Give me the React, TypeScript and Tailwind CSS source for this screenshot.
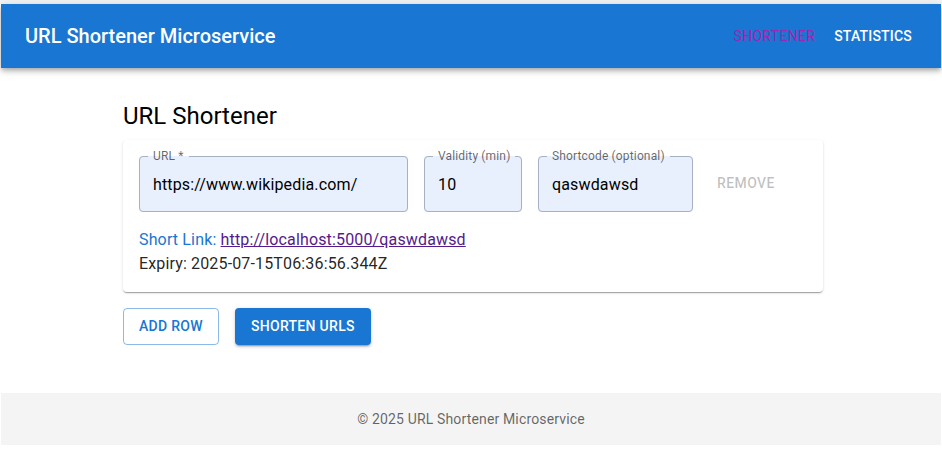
import React from 'react';

interface FieldProps {
    label: string;
    value: string;
    width: string;
}

const medium = "font-medium";

const Field: React.FC<FieldProps> = ({ label, value, width }) => (
    <fieldset className={`${width} h-[62px] min-w-0 border border-[#a7b1c2] rounded bg-[#e8f0fe] px-2 m-0`}>
        <legend className="px-[5px] text-[12px] leading-[12px] tracking-[0.15px] text-black/60 whitespace-nowrap">{label}</legend>
        <div className="h-[49px] flex items-center pl-[5px] pb-[3px] text-[16px] tracking-[0.15px] text-black whitespace-nowrap overflow-hidden">
            {value}
        </div>
    </fieldset>
);

const App: React.FC = () => {
    return (
        <div className="min-h-[472px] bg-white pt-1 px-px font-['Roboto',sans-serif]" style={{ background: 'linear-gradient(#f3f3f3 0 4px, white 4px)' }}>
            <header className="h-16 bg-[#1976d2] flex items-center pl-6 pr-[21px] shadow-[0_2px_4px_-1px_rgba(0,0,0,0.2),0_4px_5px_0_rgba(0,0,0,0.14),0_1px_10px_0_rgba(0,0,0,0.12)] relative z-10">
                <h1 className={`text-[20px] ${medium} text-white`}>URL Shortener Microservice</h1>
                <nav className="ml-auto flex gap-[3px]">
                    <button className="px-2 py-1.5 text-[14px] uppercase tracking-[0.3px] text-[#9c27b0]">Shortener</button>
                    <button className={`px-2 py-1.5 text-[14px] ${medium} uppercase tracking-[0.2px] text-white`}>Statistics</button>
                </nav>
            </header>

            <main className="w-[700px] ml-[122px] pt-8 pb-12">
                <h2 className="text-[24px] leading-8 text-black mb-2">URL Shortener</h2>
                <div className="bg-white rounded shadow-[0_2px_1px_-1px_rgba(0,0,0,0.2),0_1px_1px_0_rgba(0,0,0,0.14),0_1px_3px_0_rgba(0,0,0,0.12)] px-4 pt-[10px] pb-4">
                    <div className="flex items-end gap-4">
                        <Field label="URL *" value="https://www.wikipedia.com/" width="w-[269px]" />
                        <Field label="Validity (min)" value="10" width="w-[98px]" />
                        <Field label="Shortcode (optional)" value="qaswdawsd" width="w-[155px]" />
                        <button className={`self-end mb-[12px] px-2 py-1.5 text-[14px] ${medium} uppercase tracking-[0.4px] text-black/25`}>Remove</button>
                    </div>
                    <div className="mt-4 text-[16px] leading-6 tracking-[0.15px]">
                        <p>
                            <span className="text-[#1976d2]">Short Link: </span>
                            <a href="#" className="text-[#551a8b] underline">http://localhost:5000/qaswdawsd</a>
                        </p>
                        <p className="text-black/87">Expiry: 2025-07-15T06:36:56.344Z</p>
                    </div>
                </div>
                <div className="flex gap-4 mt-4">
                    <button className={`h-[37px] px-[15px] border border-[#1976d2]/50 rounded text-[14px] ${medium} uppercase tracking-[0.3px] text-[#1976d2]`}>Add Row</button>
                    <button className={`h-[37px] px-4 rounded bg-[#1976d2] text-[14px] ${medium} uppercase tracking-[0.3px] text-white shadow-[0_3px_1px_-2px_rgba(0,0,0,0.2),0_2px_2px_0_rgba(0,0,0,0.14),0_1px_5px_0_rgba(0,0,0,0.12)]`}>Shorten URLs</button>
                </div>
            </main>

            <footer className="h-[52px] bg-[#f4f4f4] flex items-center justify-center text-[14px] tracking-[0.15px] text-black/60">
                © 2025 URL Shortener Microservice
            </footer>
        </div>
    );
};

export default App;
